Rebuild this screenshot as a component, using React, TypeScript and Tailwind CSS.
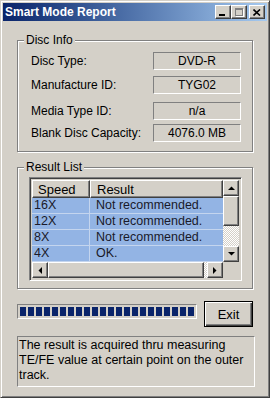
import React from "react";

const font = { fontFamily: '"Liberation Sans", Arial, sans-serif' };

const raised =
  "border border-t-white border-l-white border-r-[#404040] border-b-[#404040] shadow-[inset_-1px_-1px_0_#808080] bg-[#d4d0c8]";
const sunken2 =
  "border border-t-[#808080] border-l-[#808080] border-r-white border-b-white shadow-[inset_1px_1px_0_#404040,inset_-1px_-1px_0_#d4d0c8]";
const staticEdge =
  "border border-t-[#808080] border-l-[#808080] border-r-white border-b-white";
const dither =
  "bg-[repeating-conic-gradient(#ffffff_0%_25%,#d4d0c8_0%_50%)] bg-size-[2px_2px]";

const discInfo = [
  { label: "Disc Type:", value: "DVD-R", mt: "mt-0" },
  { label: "Manufacture ID:", value: "TYG02", mt: "mt-[6px]" },
  { label: "Media Type ID:", value: "n/a", mt: "mt-[8px]" },
  { label: "Blank Disc Capacity:", value: "4076.0 MB", mt: "mt-[4px]" },
];

const results = [
  ["16X", "Not recommended."],
  ["12X", "Not recommended."],
  ["8X", "Not recommended."],
  ["4X", "OK."],
];

const Arrow = ({ dir }: { dir: "up" | "down" | "left" | "right" }) => {
  const pts = {
    up: "0,4 7,4 3.5,0.5",
    down: "0,0 7,0 3.5,3.5",
    left: "4,0 4,7 0.5,3.5",
    right: "0,0 0,7 3.5,3.5",
  }[dir];
  const horiz = dir === "left" || dir === "right";
  return (
    <svg width={horiz ? 4 : 7} height={horiz ? 7 : 4} viewBox={horiz ? "0 0 4 7" : "0 0 7 4"}>
      <polygon points={pts} fill="#000" />
    </svg>
  );
};

const Group = ({ title, children, className }: { title: string; children: React.ReactNode; className?: string }) => (
  <fieldset
    className={`w-[236px] px-[6px] border border-[#808080] shadow-[inset_1px_1px_0_#fff,1px_1px_0_#fff] ${className ?? ""}`}
  >
    <legend className="px-[2px] text-[12px] leading-[15px] text-black bg-[#d4d0c8]">{title}</legend>
    {children}
  </fieldset>
);

export default function App() {
  return (
    <div
      style={font}
      className="w-[270px] h-[398px] p-[2px] bg-[#d4d0c8] border border-t-[#d4d0c8] border-l-[#d4d0c8] border-r-[#404040] border-b-[#404040] shadow-[inset_1px_1px_0_#fff,inset_-1px_-1px_0_#808080] overflow-hidden"
    >
      {/* Title bar */}
      <div className="h-[18px] flex items-center justify-between pl-[2px] pr-[2px] bg-linear-to-r from-[#0a246a] to-[#a6caf0]">
        <span className="text-white font-bold text-[12px] leading-none">Smart Mode Report</span>
        <div className="flex items-center">
          <div className={`w-[16px] h-[14px] ${raised} flex items-end justify-start pl-[3px] pb-[2px]`}>
            <div className="w-[6px] h-[2px] bg-black" />
          </div>
          <div className={`w-[16px] h-[14px] ${raised} flex items-center justify-center`}>
            <div className="w-[8px] h-[8px] border border-[#808080] border-t-2 shadow-[1px_1px_0_#fff]" />
          </div>
          <div className={`w-[16px] h-[14px] ml-[2px] ${raised} flex items-center justify-center`}>
            <svg width="8" height="7" viewBox="0 0 8 7">
              <path d="M0.5 0.5 L7 6.5 M7 0.5 L0.5 6.5" stroke="#000" strokeWidth="1.6" />
            </svg>
          </div>
        </div>
      </div>

      <div className="pl-[14px] pt-[12px] text-[12px] text-black">
        {/* Disc Info */}
        <Group title="Disc Info" className="pb-[9px]">
          <div className="pl-[7px] pr-[5px] pt-[4px] flex flex-col">
            {discInfo.map((d) => (
              <div key={d.label} className={`flex items-center justify-between ${d.mt}`}>
                <span className="leading-[15px] whitespace-nowrap">{d.label}</span>
                <div className={`w-[88px] h-[18px] ${staticEdge} flex items-center justify-center leading-none`}>
                  {d.value}
                </div>
              </div>
            ))}
          </div>
        </Group>

        {/* Result List */}
        <Group title="Result List" className="mt-[8px] pb-[7px]">
          <div className="pl-[5px] pr-[4px] pt-[2px]">
            <div className={`h-[104px] ${sunken2} p-[2px] flex flex-col`}>
              <div className="flex flex-1 min-h-0">
                <div className="flex-1 flex flex-col min-w-0">
                  <div className="flex h-[18px] shrink-0 text-[13px]">
                    <div className={`w-[58px] ${raised} pl-[5px] flex items-center leading-none`}>Speed</div>
                    <div className={`flex-1 ${raised} pl-[6px] flex items-center leading-none`}>Result</div>
                  </div>
                  <div className="flex-1 overflow-hidden bg-[#93b4e4] text-[12.5px]">
                    {results.map(([s, r]) => (
                      <div key={s} className="flex h-[16px] border-b border-[#c4d5ee] text-[#1a1a2a] leading-none">
                        <div className="w-[58px] pl-[2px] flex items-center border-r border-[#c4d5ee]">{s}</div>
                        <div className="flex-1 pl-[6px] flex items-center">{r}</div>
                      </div>
                    ))}
                  </div>
                </div>
                {/* vertical scrollbar */}
                <div className="w-[16px] flex flex-col shrink-0">
                  <div className={`h-[16px] ${raised} flex items-center justify-center`}>
                    <Arrow dir="up" />
                  </div>
                  <div className={`h-[30px] ${raised}`} />
                  <div className={`flex-1 ${dither}`} />
                  <div className={`h-[16px] ${raised} flex items-center justify-center`}>
                    <Arrow dir="down" />
                  </div>
                </div>
              </div>
              {/* horizontal scrollbar */}
              <div className="flex h-[16px] shrink-0">
                <div className="flex-1 flex">
                  <div className={`w-[16px] ${raised} flex items-center justify-center`}>
                    <Arrow dir="left" />
                  </div>
                  <div className={`flex-1 ${raised}`} />
                  <div className={`w-[3px] ${dither}`} />
                  <div className={`w-[16px] ${raised} flex items-center justify-center`}>
                    <Arrow dir="right" />
                  </div>
                </div>
                <div className="w-[16px] bg-[#d4d0c8]" />
              </div>
            </div>
          </div>
        </Group>

        {/* Progress + Exit */}
        <div className="flex items-start mt-[12px] w-[236px]">
          <div className={`mt-[3px] w-[180px] h-[15px] ${staticEdge} p-[2px] flex gap-[2px]`}>
            {Array.from({ length: 22 }).map((_, i) => (
              <div key={i} className="w-[6px] h-full bg-[#0a246a]" />
            ))}
          </div>
          <button
            className="ml-auto w-[49px] h-[26px] border border-black bg-[#d4d0c8] shadow-[inset_1px_1px_0_#fff,inset_-1px_-1px_0_#404040,inset_-2px_-2px_0_#808080] text-[13px] leading-none"
            style={font}
          >
            Exit
          </button>
        </div>

        {/* Description */}
        <div className={`mt-[9px] w-[238px] h-[51px] ${staticEdge} pl-[1px] pt-[1px] text-[12.5px] leading-[15px]`}>
          The result is acquired thru measuring TE/FE value at certain point on the outer track.
        </div>
      </div>
    </div>
  );
}
